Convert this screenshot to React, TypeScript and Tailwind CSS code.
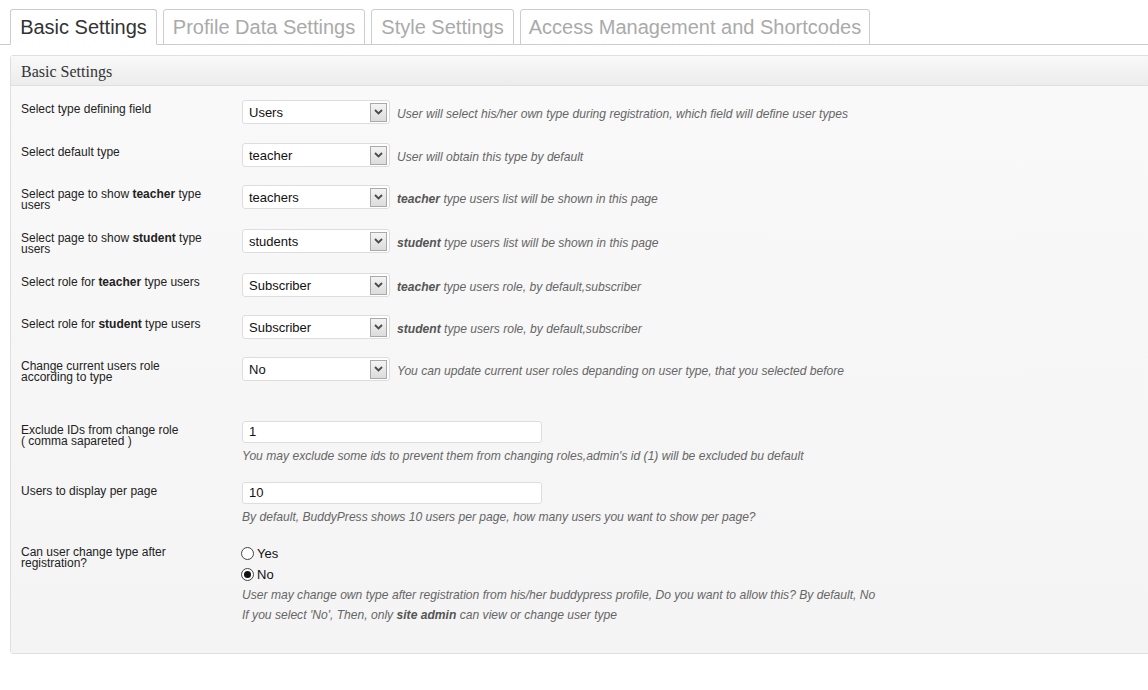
import React from "react";

const tabs = [
  { t: "Basic Settings", w: "w-[147px]" },
  { t: "Profile Data Settings", w: "w-[202px]" },
  { t: "Style Settings", w: "w-[143px]" },
  { t: "Access Management and Shortcodes", w: "w-[350px]" },
];

function Select({ value }: { value: string }) {
  return (
    <div className="flex h-[24px] w-[148px] items-center justify-between rounded-[3px] border border-[#dddddd] bg-white pl-[6px] pr-[2px] text-[13px] text-[#111]">
      <span className="pt-[1px]">{value}</span>
      <span className="flex h-[19px] w-[17px] items-center justify-center border border-[#a9a9a9] bg-gradient-to-b from-[#f4f4f4] to-[#dcdcdc]">
        <svg width="9" height="6" viewBox="0 0 9 6">
          <path d="M1 1l3.5 3.5L8 1" fill="none" stroke="#4a4a4a" strokeWidth="1.8" />
        </svg>
      </span>
    </div>
  );
}

function TextInput({ value }: { value: string }) {
  return (
    <div className="flex h-[22px] w-[300px] items-center rounded-[3px] border border-[#dddddd] bg-white pl-[6px] text-[13px] text-[#111]">
      {value}
    </div>
  );
}

function Desc({ children }: { children: React.ReactNode }) {
  return <span className="text-[12.1px] italic text-[#666]">{children}</span>;
}

function Label({ children }: { children: React.ReactNode }) {
  return (
    <div className="w-[221px] shrink-0 pr-[30px] pt-[4px] text-[12px] leading-[11px] text-[#222]">
      {children}
    </div>
  );
}

function Radio({ checked, label }: { checked?: boolean; label: string }) {
  return (
    <div className="flex h-[21px] items-center gap-[3px] text-[13px] text-[#111]">
      <span className="flex h-[13px] w-[13px] items-center justify-center rounded-full border border-[#444] bg-white">
        {checked && <span className="h-[7px] w-[7px] rounded-full bg-[#111]" />}
      </span>
      {label}
    </div>
  );
}

type Row = { label: React.ReactNode; value: string; desc: React.ReactNode; h: string };

const selectRows: Row[] = [
  {
    label: "Select type defining field",
    value: "Users",
    desc: "User will select his/her own type during registration, which field will define user types",
    h: "h-[43px]",
  },
  {
    label: "Select default type",
    value: "teacher",
    desc: "User will obtain this type by default",
    h: "h-[42px]",
  },
  {
    label: (
      <>
        Select page to show <b>teacher</b> type users
      </>
    ),
    value: "teachers",
    desc: (
      <>
        <b className="text-[#555]">teacher</b> type users list will be shown in this page
      </>
    ),
    h: "h-[44px]",
  },
  {
    label: (
      <>
        Select page to show <b>student</b> type users
      </>
    ),
    value: "students",
    desc: (
      <>
        <b className="text-[#555]">student</b> type users list will be shown in this page
      </>
    ),
    h: "h-[44px]",
  },
  {
    label: (
      <>
        Select role for <b>teacher</b> type users
      </>
    ),
    value: "Subscriber",
    desc: (
      <>
        <b className="text-[#555]">teacher</b> type users role, by default,subscriber
      </>
    ),
    h: "h-[42px]",
  },
  {
    label: (
      <>
        Select role for <b>student</b> type users
      </>
    ),
    value: "Subscriber",
    desc: (
      <>
        <b className="text-[#555]">student</b> type users role, by default,subscriber
      </>
    ),
    h: "h-[42px]",
  },
  {
    label: "Change current users role according to type",
    value: "No",
    desc: "You can update current user roles depanding on user type, that you selected before",
    h: "h-[64px]",
  },
];

export default function App() {
  return (
    <div className="h-[690px] w-[1148px] overflow-hidden bg-white font-['Liberation_Sans',Arial,sans-serif]">
      {/* tabs */}
      <div className="flex gap-[6px] border-b border-[#cccccc] pl-[10px] pt-[9px]">
        {tabs.map((tab, i) => (
          <div
            key={tab.t}
            className={
              i === 0
                ? `-mb-px flex h-[36px] ${tab.w} items-center justify-center rounded-t-[3px] border border-b-white border-[#cccccc] bg-white text-[20px] text-[#333]`
                : `-mb-px flex h-[36px] ${tab.w} items-center justify-center rounded-t-[3px] border border-[#cccccc] bg-white text-[20px] text-[#aaaaaa]`
            }
          >
            {tab.t}
          </div>
        ))}
      </div>

      {/* panel */}
      <div className="ml-[10px] mt-[10px] w-[1160px] rounded-[3px] border border-[#dfdfdf]">
        <div className="flex h-[30px] items-center border-b border-[#dfdfdf] bg-gradient-to-b from-[#f9f9f9] to-[#ececec] pl-[10px] pt-[3px] font-['Liberation_Serif',serif] text-[16px] text-[#333]">
          Basic Settings
        </div>
        <div className="bg-gradient-to-b from-[#f9f9f9] to-[#f4f4f4] pb-[28px] pl-[10px] pt-[14px]">
          {selectRows.map((r, i) => (
            <div key={i} className={`flex ${r.h}`}>
              <Label>{r.label}</Label>
              <div className="flex h-[24px] items-center gap-[7px]">
                <Select value={r.value} />
                <div className="pt-[1px]">
                  <Desc>{r.desc}</Desc>
                </div>
              </div>
            </div>
          ))}

          <div className="flex h-[61px]">
            <Label>
              Exclude IDs from change role
              <br />( comma sapareted )
            </Label>
            <div className="flex flex-col">
              <TextInput value="1" />
              <div className="mt-[2px] leading-[20px]">
                <Desc>
                  You may exclude some ids to prevent them from changing roles,admin's id (1) will be
                  excluded bu default
                </Desc>
              </div>
            </div>
          </div>

          <div className="flex h-[61px]">
            <Label>Users to display per page</Label>
            <div className="flex flex-col">
              <TextInput value="10" />
              <div className="mt-[2px] leading-[20px]">
                <Desc>
                  By default, BuddyPress shows 10 users per page, how many users you want to show per
                  page?
                </Desc>
              </div>
            </div>
          </div>

          <div className="flex">
            <Label>Can user change type after registration?</Label>
            <div className="-ml-px flex flex-col">
              <Radio label="Yes" />
              <Radio checked label="No" />
              <div className="-mt-[1px] pl-px leading-[19px]">
                <Desc>
                  User may change own type after registration from his/her buddypress profile, Do you
                  want to allow this? By default, No
                </Desc>
              </div>
              <div className="-mt-[1px] pl-px leading-[20px]">
                <Desc>
                  If you select 'No', Then, only <b className="text-[#555]">site admin</b> can view or
                  change user type
                </Desc>
              </div>
            </div>
          </div>
        </div>
      </div>
    </div>
  );
}
